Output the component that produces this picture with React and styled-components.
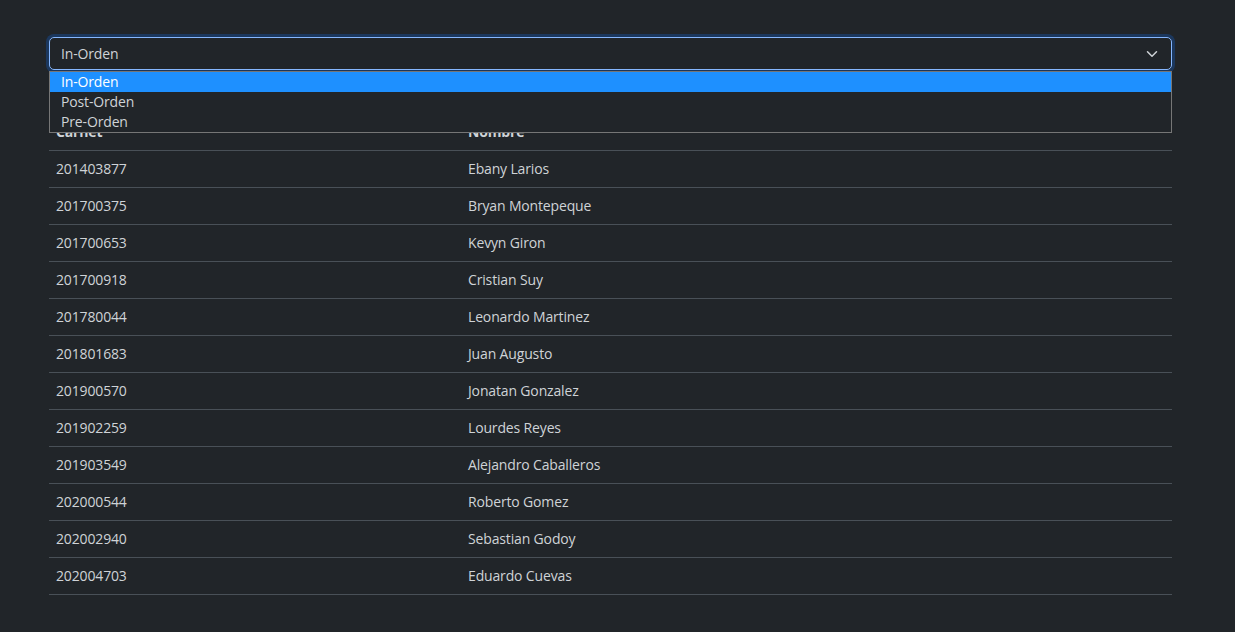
import React, { useState } from 'react'
import styled, { createGlobalStyle } from 'styled-components'

const estudiantes = [
  ['201403877', 'Ebany Larios'],
  ['201700375', 'Bryan Montepeque'],
  ['201700653', 'Kevyn Giron'],
  ['201700918', 'Cristian Suy'],
  ['201780044', 'Leonardo Martinez'],
  ['201801683', 'Juan Augusto'],
  ['201900570', 'Jonatan Gonzalez'],
  ['201902259', 'Lourdes Reyes'],
  ['201903549', 'Alejandro Caballeros'],
  ['202000544', 'Roberto Gomez'],
  ['202002940', 'Sebastian Godoy'],
  ['202004703', 'Eduardo Cuevas'],
]

const opciones = ['In-Orden', 'Post-Orden', 'Pre-Orden']

const GlobalStyle = createGlobalStyle`
  html, body {
    margin: 0;
    background: #212529;
    color: #cfd3d7;
    font-family: "Open Sans", "Noto Sans", sans-serif;
    font-size: 14px;
    letter-spacing: -0.15px;
  }
`

const App = () => {
  const [orden, setOrden] = useState('In-Orden')
  return (
    <Wrapper>
      <GlobalStyle />
      <SelectBox>
        <SelectField>
          <span>{orden}</span>
          <svg width="12" height="12" viewBox="0 0 16 16">
            <path d="m2 5 6 6 6-6" fill="none" stroke="#cfd3d7" strokeWidth="2" strokeLinecap="round" strokeLinejoin="round" />
          </svg>
        </SelectField>
        <OptionList>
          {opciones.map(o => (
            <Option key={o} active={o === orden} onClick={() => setOrden(o)}>{o}</Option>
          ))}
        </OptionList>
      </SelectBox>
      <Table>
        <thead>
          <tr>
            <Th style={{ width: 398 }}>Carnet</Th>
            <Th>Nombre</Th>
          </tr>
        </thead>
        <tbody>
          {estudiantes.map(([carnet, nombre]) => (
            <tr key={carnet}>
              <Td>{carnet}</Td>
              <Td>{nombre}</Td>
            </tr>
          ))}
        </tbody>
      </Table>
    </Wrapper>
  )
}

export default App

const Wrapper = styled.div`
  padding: 37px 63px 20px 49px;
`

const SelectBox = styled.div`
  position: relative;
`

const SelectField = styled.div`
  display: flex;
  align-items: center;
  justify-content: space-between;
  height: 33px;
  box-sizing: border-box;
  padding: 0 13px 0 11px;
  border: 1px solid #86b7fe;
  border-radius: 5px;
  box-shadow: 0 0 0 3px rgba(13, 110, 253, 0.25);
  line-height: 21px;
`

const OptionList = styled.div`
  position: absolute;
  top: 34px;
  left: 0;
  right: 0;
  background: #212529;
  border: 1px solid #767676;
  z-index: 2;
`

const Option = styled.div`
  height: 20px;
  line-height: 20px;
  padding: 0 11px;
  background: ${p => (p.active ? '#1e90ff' : 'transparent')};
  color: ${p => (p.active ? '#ffffff' : '#cfd3d7')};
  cursor: default;
`

const Table = styled.table`
  width: 100%;
  margin-top: 44px;
  border-collapse: collapse;
`

const Th = styled.th`
  text-align: left;
  font-weight: 700;
  padding: 7px 7px 8px;
  line-height: 21px;
  border-bottom: 1px solid #495057;
`

const Td = styled.td`
  padding: 7px 7px 8px;
  line-height: 21px;
  border-bottom: 1px solid #495057;
`
